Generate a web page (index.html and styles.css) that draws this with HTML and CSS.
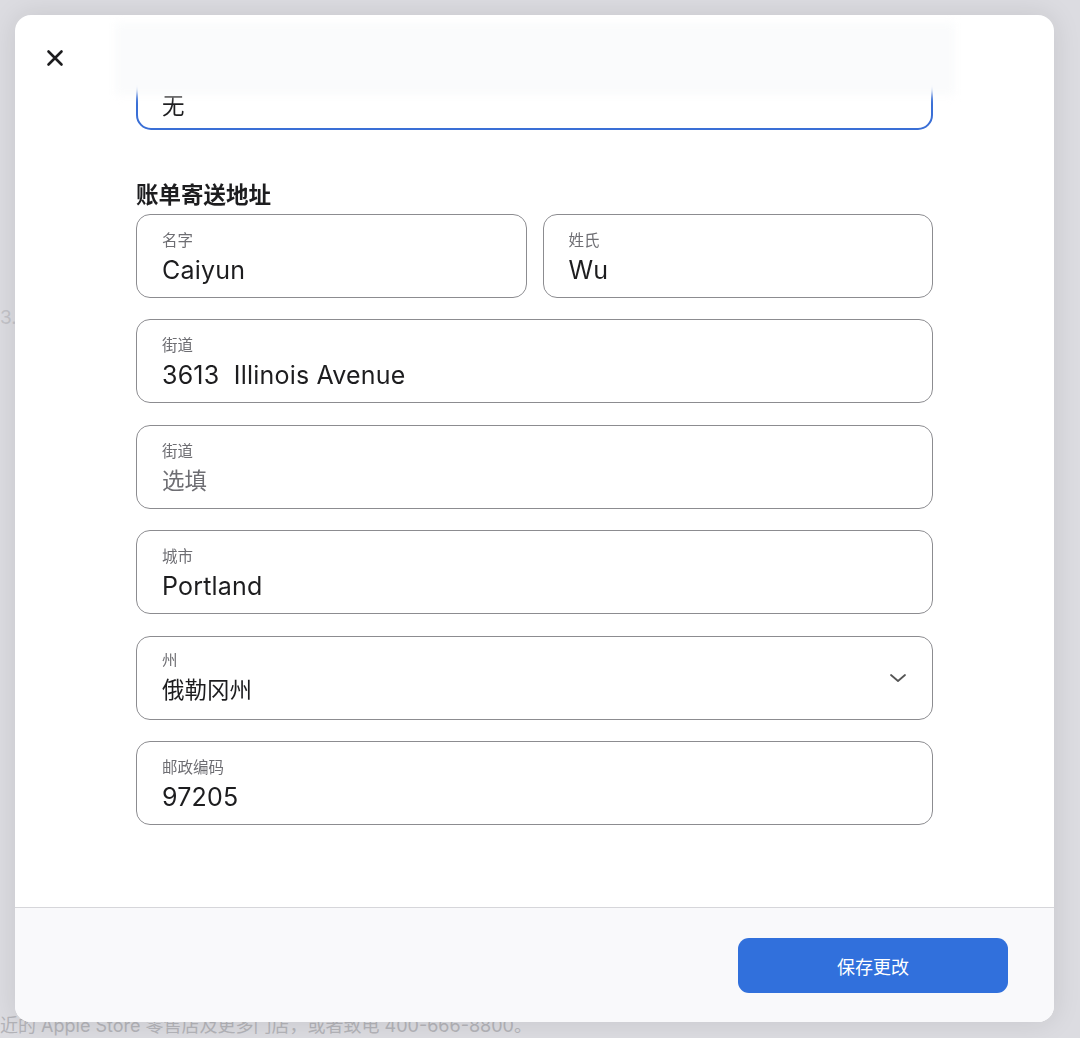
FILE: index.html
```html
<!DOCTYPE html>
<html lang="zh-CN">
<head>
<meta charset="utf-8">
<title>账单寄送地址</title>
<link rel="stylesheet" href="styles.css">
</head>
<body>
<div class="page">
  <p class="bg-step">3.</p>
  <p class="bg-note">近的 Apple Store 零售店及更多门店，或者致电 400-666-8800。</p>
</div>

<div class="modal" role="dialog">
  <div class="modal-body">
    <div class="content">
      <div class="field focused">
        <span class="label">备注</span>
        <span class="value cjk">无</span>
      </div>

      <h2 class="section-title">账单寄送地址</h2>

      <div class="fields">
        <div class="row two">
          <div class="field">
            <span class="label">名字</span>
            <span class="value">Caiyun</span>
          </div>
          <div class="field">
            <span class="label">姓氏</span>
            <span class="value">Wu</span>
          </div>
        </div>
        <div class="field">
          <span class="label">街道</span>
          <span class="value">3613&nbsp; Illinois Avenue</span>
        </div>
        <div class="field">
          <span class="label">街道</span>
          <span class="value cjk placeholder">选填</span>
        </div>
        <div class="field">
          <span class="label">城市</span>
          <span class="value">Portland</span>
        </div>
        <div class="field select">
          <div class="select-text">
            <span class="label">州</span>
            <span class="value cjk">俄勒冈州</span>
          </div>
          <svg class="chevron" width="18" height="10" viewBox="0 0 18 10" aria-hidden="true">
            <path d="M2 2 L9 8 L16 2" fill="none" stroke="#555" stroke-width="1.8" stroke-linecap="round" stroke-linejoin="round"/>
          </svg>
        </div>
        <div class="field">
          <span class="label">邮政编码</span>
          <span class="value">97205</span>
        </div>
      </div>
    </div>

    <div class="fade"></div>
    <button class="close" aria-label="关闭">
      <svg width="18" height="18" viewBox="0 0 18 18" aria-hidden="true">
        <path d="M2.5 2.5 L15.5 15.5 M15.5 2.5 L2.5 15.5" stroke="#1d1d1f" stroke-width="2.6" stroke-linecap="round"/>
      </svg>
    </button>
  </div>
  <div class="modal-footer">
    <button class="save">保存更改</button>
  </div>
</div>
</body>
</html>
```

FILE: styles.css
```css
html, body {
  margin: 0;
  padding: 0;
}

body {
  width: 1080px;
  height: 1038px;
  overflow: hidden;
  background: #dcdce1;
  font-family: "Inter", "Noto Sans CJK SC", sans-serif;
  color: #1d1d1f;
}

.page {
  height: 1038px;
  display: flex;
  flex-direction: column;
  justify-content: space-between;
  color: #c3c3c8;
  font-size: 17px;
}

.bg-step {
  margin: 306px 0 0 0;
  font-size: 19px;
}

.bg-note {
  margin: 0;
  padding-bottom: 1px;
  color: #b3b3b8;
  font-size: 18px;
  white-space: nowrap;
}

.modal {
  position: fixed;
  top: 15px;
  left: 15px;
  width: 1039px;
  height: 1007px;
  border-radius: 16px;
  background: #ffffff;
  overflow: hidden;
  display: flex;
  flex-direction: column;
  box-shadow: 0 0 28px rgba(0, 0, 0, 0.10);
}

.modal-body {
  position: relative;
  flex: 1;
  overflow: hidden;
}

.content {
  padding: 31px 121px 0;
}

.close {
  position: absolute;
  top: 34px;
  left: 31px;
  width: 18px;
  height: 18px;
  padding: 0;
  border: 0;
  background: none;
  display: flex;
}

.fade {
  position: absolute;
  top: 8px;
  left: 100px;
  width: 840px;
  height: 72px;
  background: #fafbfc;
  filter: blur(4px);
}

.section-title {
  margin: 52px 0 6px;
  font-size: 22.5px;
  line-height: 26px;
  font-weight: 700;
  color: #1d1d1f;
}

.fields {
  display: flex;
  flex-direction: column;
  gap: 21.4px;
}

.row.two {
  display: grid;
  grid-template-columns: 1fr 1fr;
  gap: 16px;
}

.field {
  box-sizing: border-box;
  height: 84px;
  border: 1px solid #8c8c90;
  border-radius: 14px;
  padding: 16px 25px 0;
  display: flex;
  flex-direction: column;
}

.field.focused {
  border: 2px solid #3a6fd6;
  border-radius: 15px;
  padding: 19px 24px 0;
}

.label {
  font-size: 15.5px;
  line-height: 20px;
  color: #6e6e73;
}

.value {
  margin-top: 4px;
  font-size: 25px;
  line-height: 30px;
  color: #1d1d1f;
  letter-spacing: 0.2px;
}

.value.cjk {
  font-size: 22.5px;
  letter-spacing: 0;
}

.value.placeholder {
  color: #6e6e73;
}

.field.select {
  flex-direction: row;
  align-items: center;
  justify-content: space-between;
  padding-top: 0;
  padding-right: 25px;
}

.select-text {
  display: flex;
  flex-direction: column;
  padding-top: 1px;
}

.modal-footer {
  box-sizing: border-box;
  height: 115px;
  border-top: 1px solid #d6d6da;
  background: #f9f9fb;
  display: flex;
  justify-content: flex-end;
  align-items: flex-start;
  padding: 30px 46px 0 0;
}

.save {
  width: 270px;
  height: 55px;
  border: 0;
  border-radius: 11px;
  background: #3170dc;
  color: #ffffff;
  font-family: "Noto Sans CJK SC", sans-serif;
  font-size: 18px;
}
```
